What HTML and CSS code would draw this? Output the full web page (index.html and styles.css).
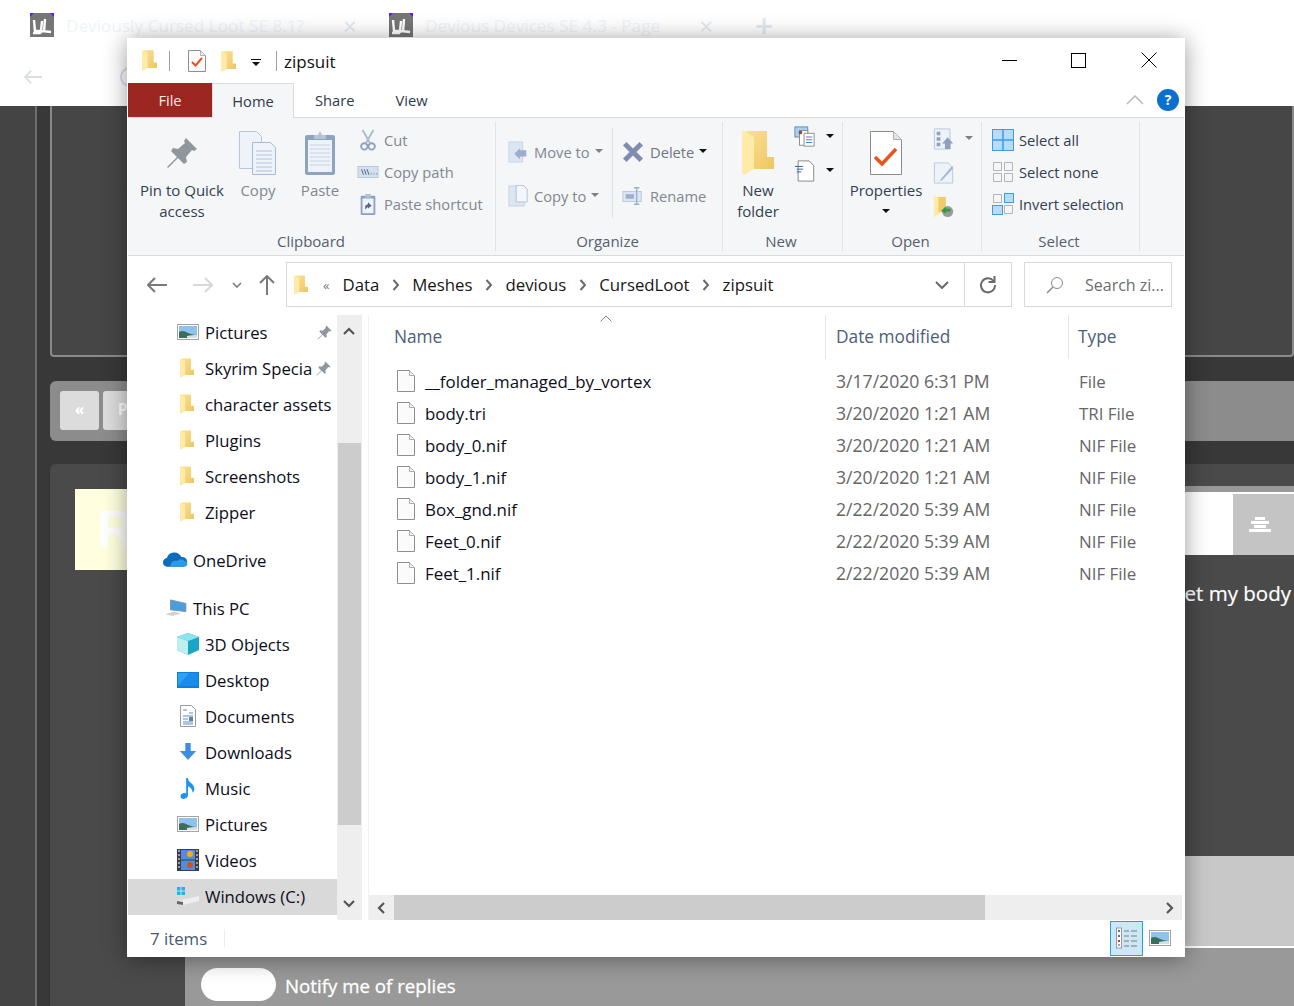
FILE: index.html
```html
<!DOCTYPE html>
<html lang="en">
<head>
    <meta charset="UTF-8">
    <title>zipsuit</title>
    <link rel="stylesheet" href="styles.css">
</head>
<body>

<svg class="defs" width="0" height="0">
    <defs>
        <linearGradient id="folder-back" x1="0" y1="0" x2="1" y2="1">
            <stop offset="0" stop-color="#fae196"/>
            <stop offset="1" stop-color="#eec660"/>
        </linearGradient>
    </defs>
    <symbol id="folder" viewBox="0 0 16 22">
        <path d="M2 0h10.500v13H16v6H2z" fill="url(#folder-back)"/>
        <path d="M0 0h1l5 3v16l-5 3-1-1z" fill="#ffeaa8"/>
    </symbol>
    <symbol id="file" viewBox="0 0 18 22">
        <path d="M.5.5h12l5 5v16H.5z" fill="#fbfbfb" stroke="#8f8f8f"/>
        <path d="M12.5.5v5h5" fill="#eee" stroke="#b0b0b0"/>
    </symbol>
    <symbol id="pin" viewBox="0 0 32 32">
        <path d="M20 1l11 11-3 2-2-1-6 7 1 5-3 2-6-6-10 10-1-1 10-10-6-6 2-3 5 1 7-6-1-2z" fill="#8f979d"/>
    </symbol>
    <symbol id="picture" viewBox="0 0 22 16">
        <rect x=".5" y=".5" width="21" height="15" fill="#fff" stroke="#a3a3a3"/>
        <rect x="2" y="2" width="18" height="12" fill="#8fc3ee"/>
        <path d="M2 8c3-2 6-1 9 1 3 1 6 2 9 2v3H2z" fill="#3d6d5e"/>
        <path d="M10 12c3-1 7-1 10-1v3h-10z" fill="#d5dfe6"/>
    </symbol>
    <symbol id="arrow-left" viewBox="0 0 20 16">
        <path d="M8 1L1 8l7 7M1.500 8H20" fill="none" stroke="currentColor" stroke-width="2"/>
    </symbol>
    <symbol id="grid" viewBox="0 0 22 22">
        <path d="M1.500 1.500h8v8h-8zM12.500 1.500h8v8h-8zM1.500 12.500h8v8h-8zM12.500 12.500h8v8h-8z" fill="none" stroke="#b5b5b5"/>
    </symbol>
    <symbol id="chev" viewBox="0 0 8 12">
        <path d="M1.500 1l4.500 5-4.500 5" fill="none" stroke="#6a6a6a" stroke-width="2"/>
    </symbol>
    <symbol id="favicon" viewBox="0 0 24 24">
        <rect width="24" height="24" fill="#6a12f0"/>
        <path d="M4 0h16l4 4v20H0V4z" fill="#767676"/>
        <path d="M4 7l1 11h6l1-10M15 6l-1 13M3 20h7l2-2 9 1" fill="none" stroke="#fff" stroke-width="2.400"/>
    </symbol>
</svg>

<header class="browser">
    <div class="tabs">
        <div class="tab">
            <svg class="favicon"><use href="#favicon"/></svg>
            <span class="tab-title">Deviously Cursed Loot SE 8.1?</span>
            <span class="tab-close">×</span>
        </div>
        <div class="tab">
            <svg class="favicon"><use href="#favicon"/></svg>
            <span class="tab-title">Devious Devices SE 4.3 - Page</span>
            <span class="tab-close">×</span>
        </div>
        <span class="tab-new">+</span>
    </div>
    <div class="browser-nav">
        <svg class="browser-back"><use href="#arrow-left"/></svg>
        <span class="browser-reload"></span>
    </div>
</header>

<div class="page">
    <div class="forum">
        <div class="card-top"></div>
        <div class="pager">
            <span class="pager-btn">«</span>
            <span class="pager-btn">P</span>
        </div>
        <div class="post">
            <div class="post-side">
                <div class="avatar">R</div>
            </div>
            <div class="post-main">
                <div class="post-toolbar">
                    <span class="quote-btn">
                        <span class="bar bar-s"></span><span class="bar bar-m"></span><span class="bar bar-m2"></span><span class="bar bar-l"></span>
                    </span>
                </div>
                <p class="post-text">et my body</p>
                <div class="editor"></div>
                <div class="post-footer">
                    <span class="pill"></span>
                    <span class="notify">Notify me of replies</span>
                </div>
            </div>
        </div>
    </div>
</div>

<div class="window">
    <div class="titlebar">
        <svg class="qa-folder"><use href="#folder"/></svg>
        <span class="qa-sep"></span>
        <svg class="qa-check" viewBox="0 0 18 22">
            <use href="#file"/>
            <path d="M4 12l3.500 3.500L14 8" fill="none" stroke="#e9541d" stroke-width="2"/>
        </svg>
        <svg class="qa-folder2"><use href="#folder"/></svg>
        <span class="qa-drop"></span>
        <span class="qa-sep qa-sep2"></span>
        <span class="title">zipsuit</span>
        <div class="controls">
            <span class="ctl-min"></span>
            <span class="ctl-max"></span>
            <svg class="ctl-close" viewBox="0 0 16 16"><path d="M.500.500l15 15M15.500.500l-15 15" stroke="#000" fill="none"/></svg>
        </div>
    </div>

    <div class="tabbar">
        <span class="rtab file">File</span>
        <span class="rtab home">Home</span>
        <span class="rtab share">Share</span>
        <span class="rtab view">View</span>
        <svg class="collapse" viewBox="0 0 18 10"><path d="M1 9l8-8 8 8" fill="none" stroke="#b9b9b9" stroke-width="1.500"/></svg>
        <span class="help">?</span>
    </div>

    <div class="ribbon">
        <section class="group g-clip">
            <div class="group-body">
                <div class="big w-pin">
                    <svg class="big-icon" width="32" height="32"><use href="#pin"/></svg>
                    <span class="big-label">Pin to Quick<br>access</span>
                </div>
                <div class="big w-copy off">
                    <svg class="big-icon" width="38" height="44" viewBox="0 0 38 44">
                        <path d="M.500.500h17l5 5v32H.500z" fill="#eef2f9" stroke="#b8c6dc"/>
                        <path d="M13.500 11.500h18l5 5v27h-23z" fill="#eef2f9" stroke="#a9bad4"/>
                        <path d="M17 20h16M17 24h16M17 28h16M17 32h16M17 36h16M17 40h16" stroke="#b4c2d8"/>
                    </svg>
                    <span class="big-label">Copy</span>
                </div>
                <div class="big w-paste off">
                    <svg class="big-icon" width="32" height="46" viewBox="0 0 32 46">
                        <rect x="1" y="5" width="30" height="40" rx="2" fill="#8ea3c4"/>
                        <rect x="4" y="10" width="24" height="32" fill="#eef2f9"/>
                        <path d="M6 15h20M6 19h20M6 23h20M6 27h20M6 31h20M6 35h20" stroke="#c6d2e4"/>
                        <path d="M10 9V5h4l2-4 2 4h4v4z" fill="#b6c2d6"/>
                    </svg>
                    <span class="big-label">Paste</span>
                </div>
                <div class="small-col clip-col off">
                    <div class="small">
                        <svg class="s-icon" viewBox="0 0 18 24"><path d="M3 1l8 14M15 1L7 15" stroke="#aab8cf" stroke-width="2" fill="none"/><circle cx="5" cy="19" r="3.500" fill="none" stroke="#8ea0bd" stroke-width="2"/><circle cx="13" cy="19" r="3.500" fill="none" stroke="#8ea0bd" stroke-width="2"/></svg>
                        <span>Cut</span>
                    </div>
                    <div class="small">
                        <svg class="s-icon" viewBox="0 0 22 24"><rect y="6" width="22" height="12" fill="#d5e0ef" stroke="#b8c6dc"/><path d="M4 9l2 6M7 9l2 6M10 9l2 6" stroke="#4a5a78" fill="none"/><path d="M14 14h1M17 14h1M20 14h1" stroke="#4a5a78"/></svg>
                        <span>Copy path</span>
                    </div>
                    <div class="small">
                        <svg class="s-icon" viewBox="0 0 18 24"><rect x="1" y="3" width="16" height="21" rx="1" fill="#8ea3c4"/><rect x="3" y="6" width="12" height="16" fill="#eef2f9"/><path d="M6 1h6v4H6z" fill="#b6c2d6"/><path d="M6 18v-4l3-2v-2l4 4-4 3v-2z" fill="#55678a"/></svg>
                        <span>Paste shortcut</span>
                    </div>
                </div>
            </div>
            <div class="group-label">Clipboard</div>
        </section>

        <section class="group g-org">
            <div class="group-body">
                <div class="small-col org-col off">
                    <div class="small">
                        <svg class="s-icon" viewBox="0 0 22 24"><path d="M1 1h15v22H1z" fill="#dbe5f3" stroke="#c6d4e8"/><path d="M20 10v7h-7v3l-6-6 6-6v2z" fill="#9caec9"/></svg>
                        <span>Move to</span><i class="caret caret-off"></i>
                    </div>
                    <div class="small">
                        <svg class="s-icon" viewBox="0 0 22 24"><path d="M1 1h17v22H1z" fill="#dbe5f3" stroke="#c6d4e8"/><path d="M9 .500h8l4 4v14H9z" fill="#f3f6fb" stroke="#b0bfd6"/></svg>
                        <span>Copy to</span><i class="caret caret-off"></i>
                    </div>
                </div>
                <span class="group-sep"></span>
                <div class="small-col del-col">
                    <div class="small">
                        <svg class="s-icon" viewBox="0 0 20 20"><path d="M2.500 2.500l15 15M17.500 2.500l-15 15" stroke="#7f8db0" stroke-width="4.500"/></svg>
                        <span class="off-text">Delete</span><i class="caret"></i>
                    </div>
                    <div class="small off">
                        <svg class="s-icon" viewBox="0 0 22 24"><rect y="7" width="20" height="11" fill="#dbe5f3" stroke="#b8c6dc"/><rect x="3" y="10" width="9" height="5" fill="#9caec9"/><path d="M15 3v18M12 3h6M12 21h6" stroke="#9caec9" fill="none" stroke-width="1.500"/></svg>
                        <span>Rename</span>
                    </div>
                </div>
            </div>
            <div class="group-label">Organize</div>
        </section>

        <section class="group g-new">
            <div class="group-body">
                <div class="big w-new">
                    <svg class="big-icon" width="32" height="42" viewBox="0 0 16 22"><use href="#folder"/></svg>
                    <span class="big-label">New<br>folder</span>
                </div>
                <div class="small-col new-col">
                    <div class="small">
                        <svg class="s-icon" viewBox="0 0 22 24"><rect y="1" width="14" height="11" fill="#a8d0ee" stroke="#5e89b5"/><rect x="5" y="5" width="9" height="16" fill="#fff" stroke="#888"/><path d="M10 8h11v14H10z" fill="#fff" stroke="#888"/><path d="M12 12h7M12 15h7M12 18h7" stroke="#3a78c4"/><circle cx="6" cy="7" r="2" fill="#a04a3a"/></svg>
                        <i class="caret"></i>
                    </div>
                    <div class="small">
                        <svg class="s-icon" viewBox="0 0 22 24"><path d="M3.500 1h12l5 5v17h-17z" fill="#fff" stroke="#808080"/><path d="M0 7h9M2 10h7M2 13h5" stroke="#1f5c9e"/></svg>
                        <i class="caret"></i>
                    </div>
                </div>
            </div>
            <div class="group-label">New</div>
        </section>

        <section class="group g-open">
            <div class="group-body">
                <div class="big w-prop">
                    <svg class="big-icon" width="32" height="44" viewBox="0 0 32 44">
                        <path d="M.500.500h23l8 8v35H.500z" fill="#fff" stroke="#8c8c8c"/>
                        <path d="M23.500.500v8h8" fill="#e4e4e4" stroke="#b0b0b0"/>
                        <path d="M5 26l7 7L26 18" fill="none" stroke="#e9541d" stroke-width="3.500"/>
                    </svg>
                    <span class="big-label">Properties</span>
                    <i class="caret caret-big"></i>
                </div>
                <div class="small-col open-col">
                    <div class="small">
                        <svg class="s-icon" viewBox="0 0 22 24"><path d="M.500 1h17v22H.500z" fill="#eef2f9" stroke="#b8c6dc"/><path d="M3 4h4v4H3zM3 10h4v4H3zM3 16h4v4H3z" fill="#8ea0bd"/><path d="M15 10l6 7h-3v6h-6v-6H9z" fill="#8ea0bd"/></svg>
                        <i class="caret caret-off"></i>
                    </div>
                    <div class="small">
                        <svg class="s-icon" viewBox="0 0 22 24"><path d="M.500 1h15l5 5v17H.500z" fill="#eef2f9" stroke="#b8c6dc"/><path d="M20 4L8 18l-2 3 3-1L21 7z" fill="#a9bad4"/></svg>
                    </div>
                    <div class="small">
                        <svg class="s-icon" viewBox="0 0 22 24"><path d="M2 1h11v17H2z" fill="#f0cb6c"/><path d="M0 0l5 2v18l-4 3H0z" fill="#ffeaa8"/><circle cx="15" cy="17" r="6" fill="#9a9a9a"/><path d="M8 16l5-4v2h5v3h-5v2z" fill="#2e9b3c"/></svg>
                    </div>
                </div>
            </div>
            <div class="group-label">Open</div>
        </section>

        <section class="group g-select">
            <div class="group-body">
                <div class="small-col">
                    <div class="small">
                        <svg class="s-icon" viewBox="0 0 22 22"><rect x=".5" y=".5" width="21" height="21" fill="#b7dcfb" stroke="#3d9be9"/><path d="M11 0v22M0 11h22" stroke="#3d9be9" stroke-width="1.500"/></svg>
                        <span class="sel">Select all</span>
                    </div>
                    <div class="small">
                        <svg class="s-icon"><use href="#grid"/></svg>
                        <span class="sel">Select none</span>
                    </div>
                    <div class="small">
                        <svg class="s-icon" viewBox="0 0 22 22"><use href="#grid"/><rect x="12.500" y=".5" width="9" height="9" fill="#b7dcfb" stroke="#3d9be9"/><rect x=".5" y="12.500" width="10" height="9" fill="#b7dcfb" stroke="#3d9be9"/></svg>
                        <span class="sel">Invert selection</span>
                    </div>
                </div>
            </div>
            <div class="group-label">Select</div>
        </section>
    </div>

    <div class="addressrow">
        <svg class="nav-back"><use href="#arrow-left"/></svg>
        <svg class="nav-fwd" viewBox="0 0 20 16"><use href="#arrow-left" transform="matrix(-1 0 0 1 20 0)"/></svg>
        <svg class="nav-recent" viewBox="0 0 10 6"><path d="M1 1l4 4 4-4" fill="none" stroke="#7a7a7a" stroke-width="1.600"/></svg>
        <svg class="nav-up" viewBox="0 0 16 20"><path d="M1 8l7-7 7 7M8 1.500V20" fill="none" stroke="#7a7a7a" stroke-width="2"/></svg>
        <div class="address">
            <svg class="addr-folder"><use href="#folder"/></svg>
            <span class="addr-more">«</span>
            <span class="crumb">Data</span><svg class="crumb-sep"><use href="#chev"/></svg>
            <span class="crumb">Meshes</span><svg class="crumb-sep"><use href="#chev"/></svg>
            <span class="crumb">devious</span><svg class="crumb-sep"><use href="#chev"/></svg>
            <span class="crumb">CursedLoot</span><svg class="crumb-sep"><use href="#chev"/></svg>
            <span class="crumb">zipsuit</span>
            <svg class="addr-drop" viewBox="0 0 14 8"><path d="M1 1l6 6 6-6" fill="none" stroke="#6a6a6a" stroke-width="2"/></svg>
            <span class="addr-refresh">
                <svg viewBox="0 0 18 18" width="18" height="18"><path d="M14.500 5A7 7 0 1 0 16 9" fill="none" stroke="#6a6a6a" stroke-width="2"/><path d="M15.500 0v6h-6" fill="none" stroke="#6a6a6a" stroke-width="2"/></svg>
            </span>
        </div>
        <div class="search">
            <svg class="search-icon" viewBox="0 0 18 18"><circle cx="11" cy="7" r="5.500" fill="none" stroke="#8a8a8a"/><path d="M7 11l-6 6" stroke="#8a8a8a" stroke-width="1.500"/></svg>
            <span>Search zi...</span>
        </div>
    </div>

    <div class="content">
        <nav class="tree">
            <div class="row d2"><svg class="t-icon t-pic"><use href="#picture"/></svg><span class="t-text">Pictures</span><svg class="t-pin"><use href="#pin"/></svg></div>
            <div class="row d2"><svg class="t-icon t-fold"><use href="#folder"/></svg><span class="t-text t-clip">Skyrim Specia</span><svg class="t-pin"><use href="#pin"/></svg></div>
            <div class="row d2"><svg class="t-icon t-fold"><use href="#folder"/></svg><span class="t-text">character assets</span></div>
            <div class="row d2"><svg class="t-icon t-fold"><use href="#folder"/></svg><span class="t-text">Plugins</span></div>
            <div class="row d2"><svg class="t-icon t-fold"><use href="#folder"/></svg><span class="t-text">Screenshots</span></div>
            <div class="row d2"><svg class="t-icon t-fold"><use href="#folder"/></svg><span class="t-text">Zipper</span></div>
            <div class="row d1 gap">
                <svg class="t-icon t-cloud" viewBox="0 0 26 16"><path d="M5 15a4.500 4.500 0 0 1-1-9 8 8 0 0 1 15-1 5 5 0 0 1 2 10z" fill="#0f6cbd"/><path d="M8 15c-1-4 3-7 7-6 2-2 6-2 7 0 4 0 5 6 0 6z" fill="#2a9bea"/></svg>
                <span class="t-text">OneDrive</span>
            </div>
            <div class="row d1 gap">
                <svg class="t-icon t-cloud" viewBox="0 0 25 20"><path d="M7 1l17 4v9L7 12z" fill="#4a9ee0" stroke="#7d8c9c"/><path d="M1 17l10-3 8 2-10 3z" fill="#cfd3d7"/></svg>
                <span class="t-text">This PC</span>
            </div>
            <div class="row d2">
                <svg class="t-icon t-pic2" viewBox="0 0 22 22"><path d="M11 0l11 4v13l-11 5L0 17V4z" fill="#19a5c4"/><path d="M0 4l11 4 11-4-11-4z" fill="#8ee3ee"/><path d="M0 4l11 4v14L0 17z" fill="#bdf0ec"/></svg>
                <span class="t-text">3D Objects</span>
            </div>
            <div class="row d2">
                <svg class="t-icon t-pic" viewBox="0 0 22 16"><rect width="22" height="16" fill="#0b7fe0"/><rect x="1" y="1" width="20" height="13" fill="#2aa1f5"/><path d="M1 14L12 1h9v13z" fill="#1a8be8"/></svg>
                <span class="t-text">Desktop</span>
            </div>
            <div class="row d2">
                <svg class="t-icon t-doc" viewBox="0 0 16 22"><path d="M.500.500h11l4 4v17H.500z" fill="#fff" stroke="#9a9a9a"/><path d="M3 5h4M9 8h4M3 11h10M3 14h5M3 17h10M3 19h10" stroke="#4a8fd0"/><rect x="9" y="12" width="4" height="4" fill="#6a7e94"/></svg>
                <span class="t-text">Documents</span>
            </div>
            <div class="row d2">
                <svg class="t-icon t-doc2" viewBox="0 0 20 20"><path d="M7 0h6v9h6l-9 10L1 9h6z" fill="#3d8ee0"/></svg>
                <span class="t-text">Downloads</span>
            </div>
            <div class="row d2">
                <svg class="t-icon t-doc2" viewBox="0 0 18 24"><path d="M7 1h2c0 5 7 6 7 12 0 2-1 3-2 4 0-4-3-6-5-7v10c0 2-2 4-5 4-4 0-4-5-1-6 1-1 3-1 4 0z" fill="#1f96ec"/></svg>
                <span class="t-text">Music</span>
            </div>
            <div class="row d2"><svg class="t-icon t-pic"><use href="#picture"/></svg><span class="t-text">Pictures</span></div>
            <div class="row d2">
                <svg class="t-icon t-vid" viewBox="0 0 22 22"><rect width="22" height="22" fill="#3a3f46"/><rect x="4" y="1" width="14" height="9.500" fill="#4f8ee0"/><rect x="4" y="11.500" width="14" height="9.500" fill="#4f8ee0"/><circle cx="13" cy="5" r="3" fill="#f0b020"/><circle cx="13" cy="16" r="3" fill="#d0502a"/><path d="M1 2h2M1 6h2M1 10h2M1 14h2M1 18h2M19 2h2M19 6h2M19 10h2M19 14h2M19 18h2" stroke="#fff"/></svg>
                <span class="t-text">Videos</span>
            </div>
            <div class="row d2 selected">
                <svg class="t-icon t-pic2" viewBox="0 0 22 20"><path d="M0 1h3.500v3.500H0zM4.500 1H8v3.500H4.500zM0 5.500h3.500V9H0zM4.500 5.500H8V9H4.500z" fill="#16b5f0"/><path d="M0 15l22-5v5L6 19l-6-1z" fill="#eee"/><path d="M0 15l6 1v3l-6-1z" fill="#666"/></svg>
                <span class="t-text">Windows (C:)</span>
            </div>
        </nav>

        <div class="vscroll">
            <svg class="v-arrow" viewBox="0 0 12 8"><path d="M1 7l5-5 5 5" fill="none" stroke="#555" stroke-width="2.200"/></svg>
            <div class="v-track"><div class="v-thumb"></div></div>
            <svg class="v-arrow" viewBox="0 0 12 8"><path d="M1 1l5 5 5-5" fill="none" stroke="#555" stroke-width="2.200"/></svg>
        </div>

        <div class="listing">
            <div class="list-head">
                <span class="col-name">Name</span>
                <span class="col-date">Date modified</span>
                <span class="col-type">Type</span>
                <svg class="sort" viewBox="0 0 12 7"><path d="M.500 6.500L6 1l5.500 5.500" fill="none" stroke="#8a8a8a"/></svg>
            </div>
            <div class="files">
                <div class="f-row"><svg class="f-icon"><use href="#file"/></svg><span class="f-name">__folder_managed_by_vortex</span><span class="f-date">3/17/2020 6:31 PM</span><span class="f-type">File</span></div>
                <div class="f-row"><svg class="f-icon"><use href="#file"/></svg><span class="f-name">body.tri</span><span class="f-date">3/20/2020 1:21 AM</span><span class="f-type">TRI File</span></div>
                <div class="f-row"><svg class="f-icon"><use href="#file"/></svg><span class="f-name">body_0.nif</span><span class="f-date">3/20/2020 1:21 AM</span><span class="f-type">NIF File</span></div>
                <div class="f-row"><svg class="f-icon"><use href="#file"/></svg><span class="f-name">body_1.nif</span><span class="f-date">3/20/2020 1:21 AM</span><span class="f-type">NIF File</span></div>
                <div class="f-row"><svg class="f-icon"><use href="#file"/></svg><span class="f-name">Box_gnd.nif</span><span class="f-date">2/22/2020 5:39 AM</span><span class="f-type">NIF File</span></div>
                <div class="f-row"><svg class="f-icon"><use href="#file"/></svg><span class="f-name">Feet_0.nif</span><span class="f-date">2/22/2020 5:39 AM</span><span class="f-type">NIF File</span></div>
                <div class="f-row"><svg class="f-icon"><use href="#file"/></svg><span class="f-name">Feet_1.nif</span><span class="f-date">2/22/2020 5:39 AM</span><span class="f-type">NIF File</span></div>
            </div>
            <div class="hscroll">
                <svg class="h-arrow" viewBox="0 0 8 12"><path d="M7 1L2 6l5 5" fill="none" stroke="#555" stroke-width="2.200"/></svg>
                <div class="h-track"><div class="h-thumb"></div></div>
                <svg class="h-arrow" viewBox="0 0 8 12"><path d="M1 1l5 5-5 5" fill="none" stroke="#555" stroke-width="2.200"/></svg>
            </div>
        </div>
    </div>

    <div class="statusbar">
        <span class="count">7 items</span>
        <span class="status-sep"></span>
        <span class="view-details">
            <svg viewBox="0 0 22 22" width="22" height="22">
                <rect x=".5" y="1" width="5" height="20" fill="#fff" stroke="#9a9a9a"/>
                <path d="M2 4h2M2 9h2" stroke="#4a7a8a" stroke-width="2"/><path d="M2 14h2" stroke="#c0402a" stroke-width="2"/><path d="M2 18h2" stroke="#8aa8c0" stroke-width="2"/>
                <path d="M8 4h5M15 4h6M8 9h5M15 9h6M8 14h5M15 14h6M8 19h5M15 19h6" stroke="#7a7a7a"/>
            </svg>
        </span>
        <svg class="view-thumb"><use href="#picture"/></svg>
    </div>
</div>

</body>
</html>
```

FILE: styles.css
```css
* {
    box-sizing: border-box;
}
html, body {
    margin: 0;
    height: 100%;
}
body {
    width: 1294px;
    height: 1006px;
    overflow: hidden;
    position: relative;
    font-family: "Open Sans", "Noto Sans", sans-serif;
    font-size: 15.5px;
    background: #3a3a3a;
}
.defs {
    position: absolute;
}

/* browser behind the window */
.browser {
    height: 106px;
    background: #fff;
}
.tabs {
    display: flex;
    align-items: center;
    height: 50px;
    padding-left: 30px;
}
.tab {
    display: flex;
    align-items: center;
    width: 359px;
    color: #eef5fa;
}
.favicon {
    width: 24px;
    height: 24px;
    flex: none;
}
.tab-title {
    margin-left: 12px;
    font-size: 17.200px;
    white-space: nowrap;
}
.tab-close {
    margin-left: 39px;
    font-size: 24px;
    color: #e3e9f0;
}
.tab-new {
    margin-left: 7px;
    font-size: 32px;
    font-weight: 600;
    color: #e3e9f0;
}
.browser-nav {
    display: flex;
    align-items: center;
    height: 54px;
    padding-left: 24px;
}
.browser-back {
    width: 18px;
    height: 16px;
    color: #d7dfea;
}
.browser-reload {
    width: 20px;
    height: 20px;
    margin-left: 78px;
    border: 2px solid #d7dfea;
    border-radius: 50%;
}

.page {
    height: 900px;
    padding-left: 37px;
    background: #444;
}
.forum {
    height: 100%;
    padding-left: 13px;
    border-left: 2px solid #6e6e6e;
    margin-left: -2px;
    background: #383838;
}
.card-top {
    height: 251px;
    background: #464646;
    border: 2px solid #8a8a8a;
    border-top: 0;
    border-radius: 0 0 4px 4px;
}
.pager {
    display: flex;
    gap: 4px;
    height: 60px;
    margin-top: 24px;
    padding: 10px;
    background: #8c8c8c;
    border-radius: 6px 0 0 6px;
}
.pager-btn {
    width: 39px;
    height: 39px;
    text-align: center;
    line-height: 37px;
    font-weight: 700;
    color: #fff;
    background: #dcdcdc;
    border-radius: 3px;
}
.post {
    display: flex;
    height: 542px;
    margin-top: 23px;
    background: #4a4a4a;
    border-radius: 6px 0 0 0;
}
.post-side {
    width: 135px;
    padding: 25px 0 0 25px;
}
.avatar {
    width: 90px;
    height: 81px;
    padding-left: 22px;
    font: 700 52px/81px "Liberation Sans", sans-serif;
    color: #fff;
    background: #ffffe0;
}
.post-main {
    flex: 1;
    display: flex;
    flex-direction: column;
    padding-top: 22px;
}
.post-toolbar {
    display: flex;
    justify-content: flex-end;
    height: 69px;
    background: #fff;
    border-top: 6px solid #999;
}
.quote-btn {
    width: 61px;
    margin-top: 2px;
    padding-right: 8px;
    display: flex;
    flex-direction: column;
    align-items: center;
    justify-content: center;
    gap: 1px;
    background: #c4c4c4;
}
.bar {
    height: 3px;
    background: #fff;
}
.bar-s { width: 10px; }
.bar-m { width: 18px; }
.bar-m2 { width: 12px; }
.bar-l { width: 22px; }
.post-text {
    height: 301px;
    margin: 0;
    padding: 23px 3px 0 0;
    text-align: right;
    font-size: 20.500px;
    line-height: 30px;
    color: #fff;
    -webkit-text-stroke: 0.2px #fff;
}
.editor {
    height: 90px;
    background: #c8c8c8;
    border-bottom: 0;
}
.post-footer {
    flex: 1;
    display: flex;
    align-items: center;
    gap: 9px;
    padding: 0 0 0 16px;
    background: #999;
    border-top: 2px solid #fff;
}
.pill {
    width: 75px;
    height: 33px;
    margin-top: 15px;
    background: #fff;
    border-radius: 17px;
}
.notify {
    margin-top: 16px;
    font-size: 18.700px;
    color: #fff;
    -webkit-text-stroke: 0.3px #fff;
}

/* explorer window */
.window {
    position: absolute;
    left: 127px;
    top: 38px;
    width: 1058px;
    height: 919px;
    display: flex;
    flex-direction: column;
    background: #fff;
    border: 1px solid #fff;
    box-shadow: 0 2px 22px rgba(0, 0, 0, 0.4);
}
.titlebar {
    display: flex;
    align-items: center;
    height: 44px;
    flex: none;
}
.qa-folder {
    width: 15px;
    height: 21px;
    margin-left: 14px;
    margin-top: -2px;
}
.qa-sep {
    width: 1px;
    height: 20px;
    margin-left: 12px;
    background: #a0a0a0;
}
.qa-sep2 {
    margin-left: 15px;
}
.qa-check {
    width: 18px;
    height: 22px;
    margin-left: 18px;
}
.qa-folder2 {
    width: 15px;
    height: 21px;
    margin-left: 15px;
}
.qa-drop {
    width: 10px;
    height: 8px;
    margin-left: 15px;
    margin-top: 4px;
    border-top: 1.500px solid #111;
    position: relative;
}
.qa-drop::after {
    content: "";
    position: absolute;
    left: 1px;
    top: 2px;
    border-left: 4px solid transparent;
    border-right: 4px solid transparent;
    border-top: 4px solid #111;
}
.title {
    margin-left: 7px;
    font-size: 17px;
    color: #111;
}
.controls {
    margin-left: auto;
    display: flex;
    align-items: center;
    margin-right: 27px;
    margin-top: -2px;
}
.ctl-min {
    width: 15px;
    height: 1px;
    background: #000;
}
.ctl-max {
    width: 15px;
    height: 15px;
    margin-left: 54px;
    border: 1px solid #000;
}
.ctl-close {
    width: 16px;
    height: 16px;
    margin-left: 55px;
}

.tabbar {
    display: flex;
    align-items: stretch;
    position: relative;
    height: 35px;
    flex: none;
    border-bottom: 1px solid #dadbdc;
}
.rtab {
    height: 34px;
    line-height: 34px;
    text-align: center;
    font-size: 14.700px;
    color: #2f3a4a;
}
.file {
    width: 84px;
    color: #f8e8e4;
    background: #9b2720;
}
.home {
    width: 82px;
    height: 35px;
    background: #f5f6f7;
    border: 1px solid #dadbdc;
    border-bottom: 0;
}
.share {
    margin-left: 21px;
}
.view {
    margin-left: 41px;
}
.collapse {
    position: absolute;
    left: 998px;
    top: 12px;
    width: 18px;
    height: 10px;
}
.help {
    position: absolute;
    left: 1029px;
    top: 6px;
    width: 22px;
    height: 22px;
    text-align: center;
    line-height: 22px;
    font-size: 14px;
    font-weight: 700;
    color: #fff;
    background: #0b6fd0;
    border-radius: 50%;
}

.ribbon {
    display: flex;
    height: 138px;
    flex: none;
    background: #f5f6f7;
    border-bottom: 1px solid #dadbdc;
}
.group {
    display: flex;
    flex-direction: column;
    position: relative;
}
.group::after {
    content: "";
    position: absolute;
    right: 0;
    top: 4px;
    bottom: 4px;
    width: 1px;
    background: #e1e3e6;
}
.g-clip { width: 368px; }
.g-org { width: 227px; }
.g-new { width: 120px; }
.g-open { width: 139px; }
.g-select { width: 158px; }
.group-body {
    flex: 1;
    display: flex;
    padding-top: 6px;
}
.group-label {
    height: 26px;
    padding-right: 4px;
    text-align: center;
    font-size: 15px;
    line-height: 24px;
    color: #56606e;
}
.g-clip .group-label {
    padding-right: 2px;
}
.big {
    display: flex;
    flex-direction: column;
    align-items: center;
    flex: none;
    font-size: 15px;
    color: #33404f;
}
.big-icon {
    height: 50px;
    margin-top: 4px;
}
.big-label {
    margin-top: 2px;
    line-height: 21px;
    text-align: center;
    white-space: nowrap;
}
.off {
    color: #7f8791;
}
.off-text {
    color: #6f7782;
}
.w-pin { width: 84px; margin-left: 12px; }
.w-copy { width: 50px; margin-left: 9px; }
.w-paste { width: 50px; margin-left: 12px; }
.w-new { width: 50px; margin-left: 10px; }
.w-prop { width: 72px; margin-left: 7px; }
.small-col {
    display: flex;
    flex-direction: column;
}
.small {
    display: flex;
    align-items: center;
    height: 32px;
    font-size: 14.700px;
    white-space: nowrap;
}
.s-icon {
    width: 22px;
    height: 22px;
    margin-right: 5px;
    flex: none;
}
.clip-col { margin-left: 12px; }
.org-col {
    width: 105px;
    margin-left: 11px;
    margin-top: 12px;
    gap: 12px;
}
.del-col {
    margin-left: 9px;
    margin-top: 12px;
    gap: 12px;
}
.del-col .s-icon {
    margin-right: 6px;
}
.group-sep {
    width: 1px;
    height: 90px;
    margin-top: 4px;
    background: #dfe1e4;
}
.new-col {
    margin-left: 11px;
    margin-top: -3px;
    gap: 2px;
}
.open-col {
    margin-left: 11px;
    margin-top: -1px;
    gap: 2px;
}
.g-select .small-col {
    margin-left: 10px;
}
.sel {
    color: #33404f;
}
.caret {
    width: 0;
    height: 0;
    margin-left: 5px;
    margin-top: -3px;
    border-left: 4px solid transparent;
    border-right: 4px solid transparent;
    border-top: 4px solid #111;
}
.caret-off {
    border-top-color: #808080;
}
.caret-big {
    margin: 8px 0 0;
}

.addressrow {
    display: flex;
    align-items: center;
    height: 59px;
    flex: none;
    padding: 6px 0 8px;
}
.nav-back {
    width: 20px;
    height: 16px;
    margin-left: 19px;
    color: #7a7a7a;
}
.nav-fwd {
    width: 20px;
    height: 16px;
    margin-left: 26px;
    color: #d8d8d8;
}
.nav-recent {
    width: 10px;
    height: 6px;
    margin-left: 19px;
}
.nav-up {
    width: 16px;
    height: 20px;
    margin-left: 17px;
}
.address {
    display: flex;
    align-items: center;
    width: 726px;
    height: 45px;
    margin-left: 11px;
    padding-left: 7px;
    border: 1px solid #d9d9d9;
    font-size: 16.800px;
    color: #161616;
}
.addr-folder {
    width: 14px;
    height: 20px;
}
.addr-more {
    margin-left: 15px;
    font-size: 13px;
    color: #777;
}
.addr-more + .crumb {
    margin-left: 13px;
}
.crumb-sep {
    width: 8px;
    height: 12px;
    margin: 0 12.500px;
}
.addr-drop {
    width: 14px;
    height: 8px;
    margin-left: auto;
}
.addr-refresh {
    display: flex;
    align-items: center;
    justify-content: center;
    width: 47px;
    height: 100%;
    margin-left: 15px;
    border-left: 1px solid #d9d9d9;
}
.search {
    display: flex;
    align-items: center;
    width: 148px;
    height: 45px;
    margin-left: 12px;
    padding-left: 21px;
    border: 1px solid #d9d9d9;
    font-size: 16px;
    color: #6d6d6d;
}
.search-icon {
    width: 18px;
    height: 18px;
    margin-right: 21px;
    flex: none;
}

.content {
    flex: 1;
    display: flex;
    min-height: 0;
}
.tree {
    width: 209px;
    font-size: 16.700px;
    color: #0d0d1a;
}
.row {
    display: flex;
    align-items: center;
    height: 36px;
    padding-bottom: 2px;
    white-space: nowrap;
}
.gap {
    margin-top: 12px;
}
.d1 .t-icon {
    margin-left: 35px;
}
.d1 .t-text {
    margin-left: 5px;
}
.d2 {
    padding-left: 49px;
}
.selected {
    background: #d9d9d9;
}
.t-icon {
    flex: none;
}
.t-text {
    margin-left: 6px;
}
.t-pic { width: 22px; height: 16px; }
.t-pic2 { width: 22px; height: 22px; }
.t-doc { width: 16px; height: 22px; margin: 0 3px; }
.t-doc2 { width: 18px; height: 22px; margin: 0 2px; }
.t-vid { width: 22px; height: 22px; }
.t-fold { width: 14px; height: 20px; margin: 0 4px 0 3px; flex: none; }
.t-fold + .t-text { margin-left: 7px; }
.t-cloud { width: 25px; height: 18px; }
.t-clip {
    width: 108px;
    flex: none;
}
.t-pin {
    width: 15px;
    height: 15px;
    margin-left: 3px;
    flex: none;
}
.row:first-child .t-pin {
    margin-left: 49px;
}
.vscroll {
    display: flex;
    flex-direction: column;
    width: 25px;
    background: #eee;
}
.v-arrow {
    width: 12px;
    height: 8px;
    margin: 12px 6px;
    flex: none;
}
.v-track {
    flex: 1;
    padding: 96px 1px 0;
}
.v-thumb {
    height: 382px;
    background: #ccc;
}
.listing {
    flex: 1;
    display: flex;
    flex-direction: column;
    margin-left: 6px;
    border-left: 1px solid #f2f2f2;
}
.list-head {
    display: flex;
    position: relative;
    height: 44px;
    flex: none;
    font-size: 17.300px;
    line-height: 44px;
    color: #4c6078;
}
.col-name {
    width: 457px;
    padding-left: 25px;
    border-right: 1px solid #e5e5e5;
}
.col-date {
    width: 243px;
    padding-left: 10px;
    border-right: 1px solid #e5e5e5;
}
.col-type {
    padding-left: 9px;
}
.sort {
    position: absolute;
    left: 231px;
    top: 0;
    width: 12px;
    height: 7px;
}
.files {
    flex: 1;
    padding-top: 6px;
    font-size: 16.900px;
}
.f-row {
    display: flex;
    align-items: center;
    height: 32px;
    color: #0d0d1a;
}
.f-icon {
    width: 18px;
    height: 22px;
    margin-left: 28px;
    flex: none;
}
.f-name {
    width: 411px;
    margin-left: 10px;
    white-space: nowrap;
}
.f-date {
    width: 243px;
    font-size: 17.600px;
    color: #666;
    white-space: nowrap;
}
.f-type {
    color: #666;
}
.hscroll {
    display: flex;
    align-items: center;
    width: 813px;
    height: 25px;
    flex: none;
    background: #eee;
}
.h-arrow {
    width: 8px;
    height: 12px;
    margin: 0 8px;
    flex: none;
}
.h-track {
    flex: 1;
    height: 100%;
    padding-left: 1px;
}
.h-thumb {
    width: 591px;
    height: 100%;
    background: #ccc;
}

.statusbar {
    display: flex;
    align-items: center;
    height: 36px;
    flex: none;
    padding-left: 22px;
    font-size: 16.800px;
    color: #49586c;
}
.status-sep {
    width: 1px;
    height: 18px;
    margin-left: 17px;
    background: #ededed;
}
.view-details {
    display: flex;
    align-items: center;
    justify-content: center;
    width: 33px;
    height: 35px;
    margin-left: auto;
    background: #cce8f6;
    border: 1px solid #26a0da;
}
.view-thumb {
    width: 22px;
    height: 16px;
    margin-left: 6px;
    margin-right: 13px;
}
```
